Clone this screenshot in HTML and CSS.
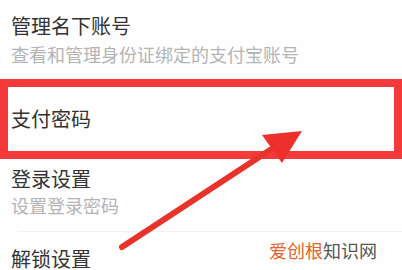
FILE: index.html
```html
<!DOCTYPE html>
<html lang="zh">
<head>
<meta charset="utf-8">
<link rel="stylesheet" href="styles.css">
</head>
<body>
<div class="page">
  <div class="item item-first">
    <div class="title">管理名下账号</div>
    <div class="sub">查看和管理身份证绑定的支付宝账号</div>
  </div>
  <div class="item item-pay">
    <div class="title">支付密码</div>
  </div>
  <div class="item item-login">
    <div class="title">登录设置</div>
    <div class="sub sub-tight">设置登录密码</div>
  </div>
  <div class="divider"></div>
  <div class="item item-unlock">
    <div class="title">解锁设置</div>
  </div>

  <div class="highlight"></div>
  <svg class="arrow" width="402" height="270" viewBox="0 0 402 270">
    <line x1="122" y1="247" x2="270" y2="150" stroke="#e8332b" stroke-width="6" stroke-linecap="round"/>
    <polygon points="302,131 262,135 282,163" fill="#ec302c"/>
  </svg>
  <div class="watermark"><span class="wm-a">爱创根</span><span class="wm-b">知识网</span></div>
</div>
</body>
</html>
```
FILE: styles.css
```css
html, body {
  margin: 0;
  padding: 0;
  background: #fefefe;
}
.page {
  position: relative;
  width: 402px;
  height: 270px;
  overflow: hidden;
  font-family: "Noto Sans CJK SC", "Noto Sans", sans-serif;
}
.item {
  padding-left: 11px;
}
.title {
  font-size: 20px;
  line-height: 26px;
  color: #333333;
}
.sub {
  font-size: 18px;
  line-height: 22px;
  color: #b4b4b4;
  margin-top: 4px;
}
.sub-tight {
  margin-top: 2px;
}
.item-first {
  padding-top: 13px;
}
.item-pay {
  margin-top: 41px;
}
.item-login {
  margin-top: 34px;
}
.divider {
  margin-top: 15px;
  margin-left: 18px;
  height: 1px;
  background: #f1f1f1;
}
.item-unlock {
  margin-top: 14px;
}
.highlight {
  position: absolute;
  left: 0;
  top: 79px;
  width: 402px;
  height: 80px;
  box-sizing: border-box;
  border: 8px solid #f43a3a;
}
.arrow {
  position: absolute;
  left: 0;
  top: 0;
}
.watermark {
  position: absolute;
  left: 269px;
  top: 238px;
  font-size: 18px;
  line-height: 24px;
}
.wm-a {
  color: #e2642c;
}
.wm-b {
  color: #555555;
}
```
